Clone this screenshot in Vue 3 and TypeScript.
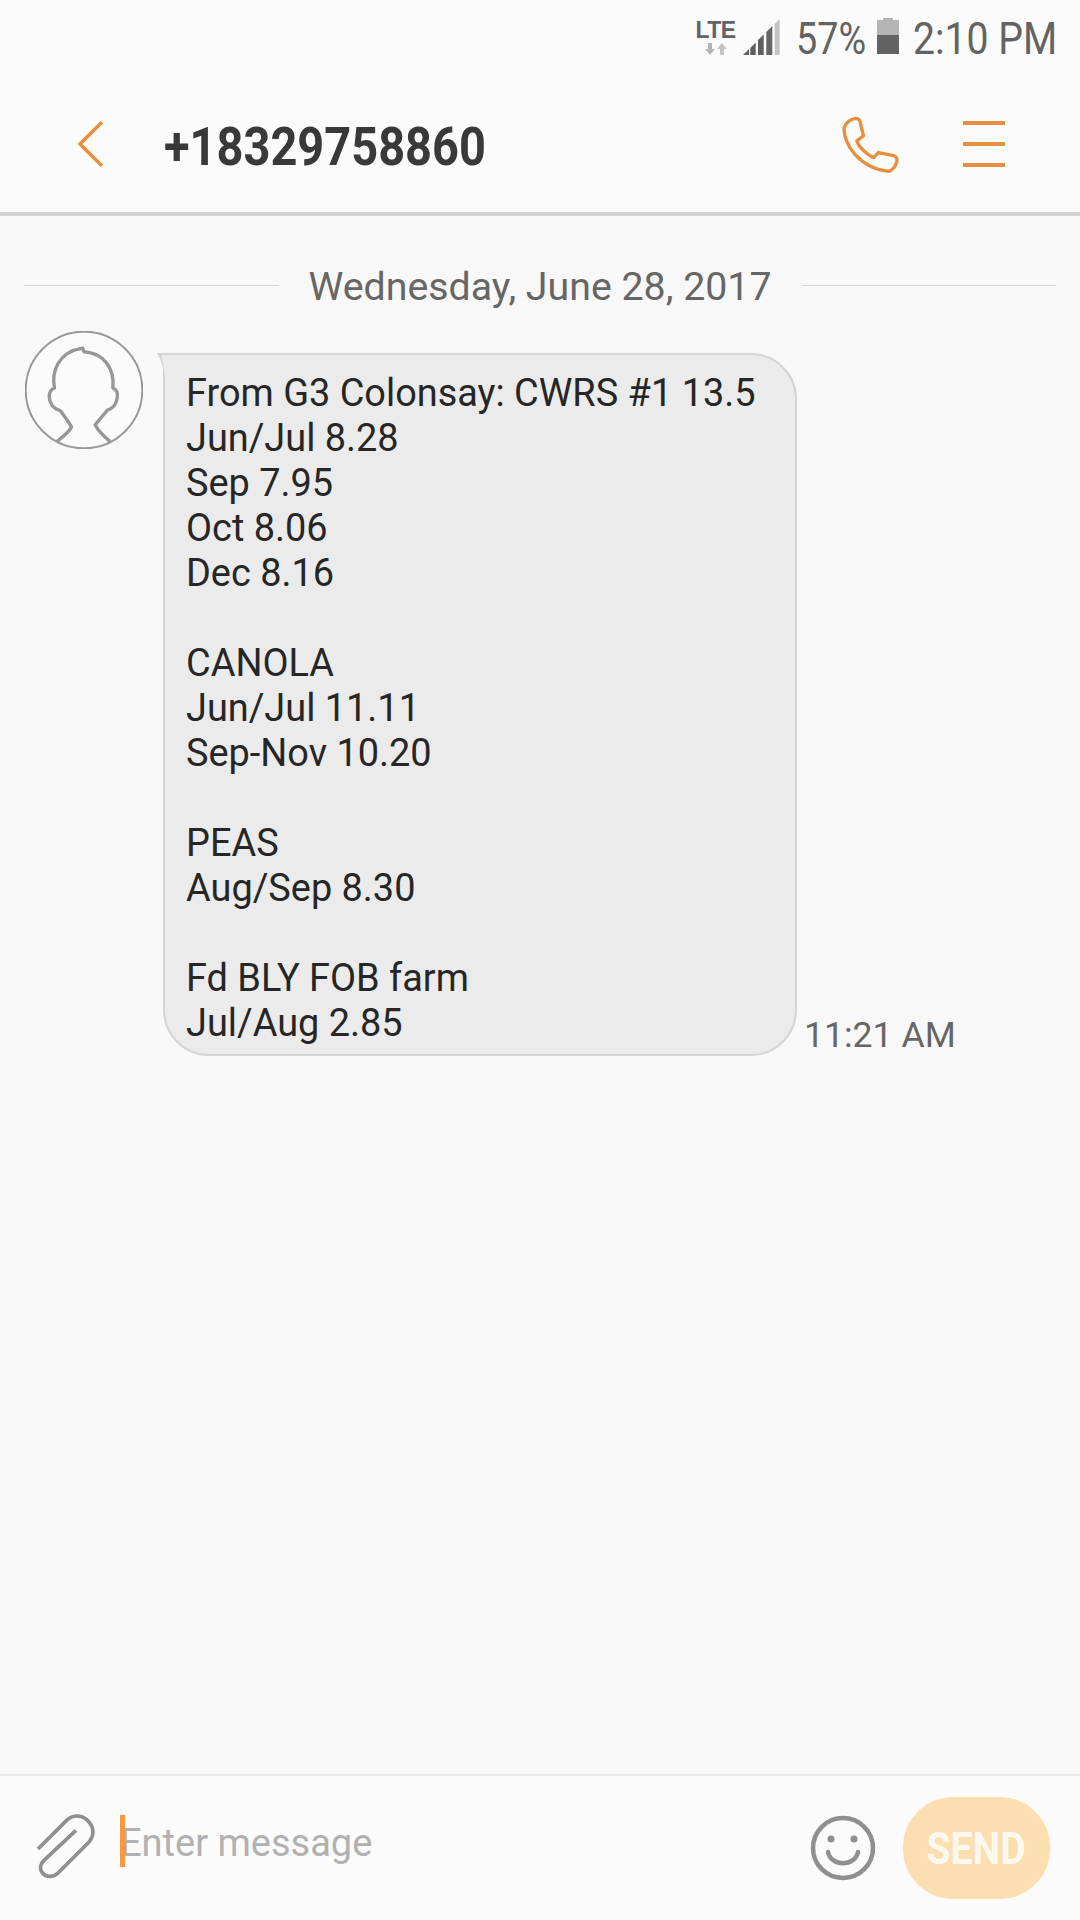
<template>
  <div class="screen">
    <div class="status-bar">
      <div class="net">
        <span class="lte">LTE</span>
        <svg class="arrows" viewBox="0 0 24 12" width="24" height="12">
          <path d="M4 0h4v6h3l-5 6-5-6h3z" fill="#b5b5b5" />
          <path d="M16 12h4V6h3l-5-6-5 6h3z" fill="#c4c4c4" />
        </svg>
      </div>
      <svg class="signal" viewBox="0 0 37 37" width="37" height="37">
        <path d="M0 36 6 30V36z" fill="#5f5f5f" />
        <path d="M7.300 29 12.700 23.500V36H7.300z" fill="#5f5f5f" />
        <path d="M15 21 20.700 15.500V36H15z" fill="#5f5f5f" />
        <path d="M23.300 13 29.300 7V36H23.300z" fill="#666" />
        <path d="M31.700 5 36.700 0V36H31.700z" fill="#c4c4c4" />
      </svg>
      <span class="pct">57%</span>
      <div class="battery"><div class="battery-level"></div></div>
      <span class="clock">2:10 PM</span>
    </div>

    <header class="top-bar">
      <svg class="back" viewBox="0 0 28 48" width="28" height="48">
        <path d="M25 2 3 24l22 22" fill="none" stroke="#e78f3f" stroke-width="3.500" />
      </svg>
      <h1 class="title">+18329758860</h1>
      <svg class="phone" viewBox="546 346 170 170" width="57" height="57">
        <path
          d="M552 382C556 366 572 354 588 353C596 353 600 360 601 368L610 405L590 420C594 432 600 440 610 449C620 458 630 466 640 470L655 455L700 464C708 466 712 474 709 484C704 498 696 508 686 511C650 508 612 490 586 462C566 440 552 412 552 382Z"
          fill="none"
          stroke="#e78f3f"
          stroke-width="10"
          stroke-linejoin="round"
        />
      </svg>
      <div class="menu">
        <span></span>
        <span></span>
        <span></span>
      </div>
    </header>

    <main class="thread">
      <div class="date-row">
        <div class="rule"></div>
        <span class="date">Wednesday, June 28, 2017</span>
        <div class="rule"></div>
      </div>
      <div class="message">
        <svg class="avatar" viewBox="76 240 352 352" width="118" height="118">
          <circle cx="252" cy="416" r="174" fill="#fbfbfb" stroke="#979797" stroke-width="6" />
          <path
            d="M170 570 C190 555 205 545 215 526 C205 510 192 492 182 478C166 474 150 462 148 436C148 422 154 414 164 410C154 360 176 302 248 291L252 302C310 306 344 350 338 410C348 414 354 424 351 440C348 460 336 472 322 476C310 490 298 505 285 520C295 540 312 555 330 570"
            fill="none"
            stroke="#979797"
            stroke-width="10"
            stroke-linejoin="round"
          />
        </svg>
        <div class="bubble">
          <svg class="tail" viewBox="0 0 8 32" width="8" height="32">
            <path d="M0 0H8V32C8 20 5 8 0 0Z" fill="#d4d4d4" />
            <path d="M4 2H8V26C7.500 16 6 8 4 2Z" fill="#ebebeb" />
          </svg>
          {{ body }}
        </div>
        <span class="time">11:21 AM</span>
      </div>
    </main>

    <footer class="composer">
      <svg class="clip" viewBox="110 165 180 195" width="60" height="65">
        <path
          d="M116 270 202 184C222 164 254 168 270 190C286 210 284 234 266 252L176 342C160 358 138 354 128 340C120 328 124 314 134 304L230 214"
          fill="none"
          stroke="#8f8f8f"
          stroke-width="11"
        />
      </svg>
      <div class="input">
        <span class="caret"></span>
        <span class="placeholder">Enter message</span>
      </div>
      <svg class="smiley" viewBox="0 0 66 66" width="66" height="66">
        <circle cx="33" cy="33" r="30" fill="none" stroke="#8f8f8f" stroke-width="4.500" />
        <circle cx="21" cy="24" r="3.500" fill="#8f8f8f" />
        <circle cx="44" cy="24" r="3.500" fill="#8f8f8f" />
        <path d="M18 37c3 15 27 15 30 0" fill="none" stroke="#8f8f8f" stroke-width="4.500" stroke-linecap="round" />
      </svg>
      <button class="send"><span class="send-label">SEND</span></button>
    </footer>
  </div>
</template>

<script setup lang="ts">
const body = `From G3 Colonsay: CWRS #1 13.5
Jun/Jul 8.28
Sep 7.95
Oct 8.06
Dec 8.16

CANOLA
Jun/Jul 11.11
Sep-Nov 10.20

PEAS
Aug/Sep 8.30

Fd BLY FOB farm
Jul/Aug 2.85`
</script>

<style>
html,
body {
  margin: 0;
  background: #f8f8f8;
}
</style>

<style scoped>
.screen {
  width: 1080px;
  height: 1920px;
  display: flex;
  flex-direction: column;
  background: #f8f8f8;
  font-family: Roboto, "Liberation Sans", sans-serif;
  overflow: hidden;
}

.status-bar {
  height: 76px;
  display: flex;
  align-items: flex-start;
  padding-top: 18px;
  padding-right: 24px;
  justify-content: flex-end;
  box-sizing: border-box;
  background: #fbfbfb;
  color: #636363;
}

.net {
  width: 37px;
  display: flex;
  flex-direction: column;
  align-items: center;
  margin-right: 9px;
  margin-top: 2px;
}

.lte {
  font-family: "Liberation Sans", sans-serif;
  font-size: 23px;
  line-height: 20px;
  font-weight: 700;
  color: #636363;
  letter-spacing: -0.5px;
}

.arrows {
  margin-top: 3px;
}

.signal {
  margin-top: 1px;
  margin-right: 16px;
}

.pct,
.clock {
  font-size: 45px;
  line-height: 42px;
  display: inline-block;
  white-space: nowrap;
  transform-origin: left center;
}

.pct {
  width: 70px;
  transform: scaleX(0.84);
}

.clock {
  width: 143px;
  transform: scaleX(0.87);
}

.battery {
  width: 22px;
  height: 34px;
  margin: 2px 14px 0 11px;
  background: #b5b5b5;
  position: relative;
  display: flex;
  align-items: flex-end;
}

.battery::before {
  content: "";
  position: absolute;
  top: -2px;
  left: 6px;
  width: 10px;
  height: 3px;
  background: #b5b5b5;
}

.battery-level {
  width: 100%;
  height: 19px;
  background: #636363;
}

.top-bar {
  height: 140px;
  box-sizing: border-box;
  display: flex;
  align-items: center;
  padding: 0 75px 0 77px;
  background: #fbfbfb;
  border-bottom: 4px solid #d3d3d3;
}

.title {
  margin: 6px 0 0 59px;
  font-size: 53px;
  font-weight: 700;
  color: #393939;
  line-height: 60px;
  flex: 1;
  transform: scaleX(0.886);
  transform-origin: left center;
}

.phone {
  margin-right: 64px;
}

.menu {
  width: 42px;
  height: 46px;
  display: flex;
  flex-direction: column;
  justify-content: space-between;
}

.menu span {
  height: 4px;
  background: #e78f3f;
}

.thread {
  flex: 1;
  padding: 46px 24px 0;
}

.date-row {
  display: flex;
  align-items: center;
  gap: 30px;
  height: 46px;
}

.rule {
  flex: 1;
  height: 1px;
  background: #d6d6d6;
}

.date {
  font-size: 39.300px;
  color: #666;
  white-space: nowrap;
  padding-top: 4px;
}

.message {
  display: flex;
  align-items: flex-end;
  position: relative;
  margin-top: 23px;
  padding-top: 22px;
}

.avatar {
  position: absolute;
  left: 1px;
  top: 0;
}

.bubble {
  position: relative;
  margin-left: 139px;
  width: 634px;
  height: 703px;
  box-sizing: border-box;
  padding: 16px 20px 12px 21px;
  background: #ebebeb;
  border: 2px solid #d4d4d4;
  border-radius: 0 46px 46px 46px;
  font-size: 37.900px;
  line-height: 45px;
  color: #262626;
  white-space: pre-line;
}

.tail {
  position: absolute;
  left: -8px;
  top: -2px;
}

.time {
  margin-left: 7px;
  font-size: 35.600px;
  line-height: 40px;
  color: #666;
  padding-bottom: 1px;
  white-space: nowrap;
}

.composer {
  height: 146px;
  box-sizing: border-box;
  border-top: 2px solid #e8e8e8;
  background: #fbfbfb;
  display: flex;
  align-items: center;
  padding: 0 30px 0 36px;
}

.clip {
  margin-bottom: 3px;
}

.input {
  flex: 1;
  display: flex;
  align-items: center;
  position: relative;
  margin-left: 24px;
  margin-bottom: 14px;
  height: 52px;
}

.caret {
  position: absolute;
  left: 0;
  top: 0;
  width: 5px;
  height: 52px;
  background: #f79a3f;
}

.placeholder {
  font-size: 38px;
  color: #b1b1b1;
  padding-top: 4px;
}

.smiley {
  margin-right: 27px;
}

.send {
  width: 147px;
  height: 102px;
  border: none;
  border-radius: 50px;
  background: #fbdfb0;
  color: #fdf8ee;
  font-family: Roboto, "Liberation Sans", sans-serif;
  font-size: 45px;
  font-weight: 700;
  padding: 0;
}

.send-label {
  display: inline-block;
  transform: scaleX(0.87);
}
</style>
